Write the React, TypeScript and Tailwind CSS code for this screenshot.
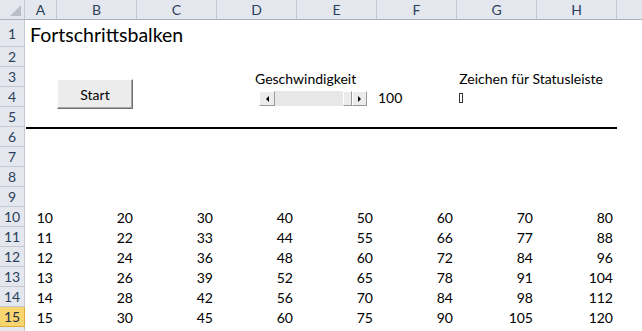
import React from "react";

const COLS = [
  { name: "A", w: "w-[32px]" },
  { name: "B", w: "w-[80px]" },
  { name: "C", w: "w-[80px]" },
  { name: "D", w: "w-[80px]" },
  { name: "E", w: "w-[80px]" },
  { name: "F", w: "w-[80px]" },
  { name: "G", w: "w-[80px]" },
  { name: "H", w: "w-[80px]" },
  { name: "", w: "w-[40px]" },
];

const ROWS = Array.from({ length: 16 }, (_, i) => i + 1);

function RowHeader({ n }: { n: number }) {
  const selected = n === 15;
  return (
    <div
      className={
        selected
          ? "flex w-[25px] shrink-0 items-center justify-center border-r border-b border-[#e2a93c] bg-[#f9d56f] text-[#1f2f46]"
          : "flex w-[25px] shrink-0 items-center justify-center border-r border-b border-[#c3c9d1] bg-[#e4e8ee] text-[#2b3f5c]"
      }
    >
      {/* row 16 is only a sliver at the bottom edge */}
      {n < 16 ? n : null}
    </div>
  );
}

function NumberRow({ r }: { r: number }) {
  return (
    <>
      {COLS.slice(0, 8).map((c, i) => (
        <div key={c.name} className={`${c.w} shrink-0 pr-[4px] text-right`}>
          {r * (i + 1)}
        </div>
      ))}
    </>
  );
}

function ScrollBar() {
  return (
    <div className="absolute left-[259px] top-[91px] flex h-[15px] w-[108px]">
      <div className="flex w-[16px] items-center justify-center border border-[#9a9a9a] border-t-white border-l-white bg-[#ececec]">
        <span className="h-0 w-0 border-y-[3px] border-r-[3px] border-y-transparent border-r-black" />
      </div>
      <div className="flex-1 bg-[#f0f0f0] bg-[radial-gradient(#dcdcdc_0.6px,transparent_0.8px)] bg-[length:2px_2px]" />
      <div className="w-[9px] border border-[#9a9a9a] border-t-white border-l-white bg-[#ececec]" />
      <div className="flex w-[15px] items-center justify-center border border-[#9a9a9a] border-t-white border-l-white bg-[#ececec]">
        <span className="h-0 w-0 border-y-[3px] border-l-[3px] border-y-transparent border-l-black" />
      </div>
    </div>
  );
}

export default function App() {
  return (
    <div className="relative h-[331px] w-[642px] overflow-hidden bg-white font-['Lato',sans-serif] text-[14px] text-black">
      {/* column headers */}
      <div className="flex h-[20px] border-b border-[#aab3bf] bg-[#e4e8ee] text-[#2b3f5c]">
        <div className="relative w-[25px] shrink-0 border-r border-[#c3c9d1]">
          <span className="absolute bottom-[3px] right-[3px] h-0 w-0 border-b-[11px] border-l-[11px] border-b-[#b8bfc8] border-l-transparent" />
        </div>
        {COLS.map((c) => (
          <div
            key={c.name || "I"}
            className={`${c.w} flex shrink-0 items-center justify-center border-r border-[#c3c9d1]`}
          >
            {c.name}
          </div>
        ))}
      </div>

      {ROWS.map((n) => (
        <div key={n} className={`flex ${n === 1 ? "h-[27px]" : "h-[20px]"}`}>
          <RowHeader n={n} />
          <div className="flex flex-1 items-center">
            {n === 1 && (
              <span className="pl-[5px] pt-[2px] text-[19.5px] leading-none">Fortschrittsbalken</span>
            )}
            {n === 3 && (
              <>
                <span className="pl-[230px] pt-[3px]">Geschwindigkeit</span>
                <span className="pl-[103px] pt-[3px]">Zeichen für Statusleiste</span>
              </>
            )}
            {n === 4 && (
              <>
                <span className="pl-[353px]">100</span>
                <span className="ml-[57px] mt-[1px] h-[10px] w-[4px] border border-[#333]" />
              </>
            )}
            {n >= 10 && n <= 15 && <NumberRow r={n} />}
          </div>
        </div>
      ))}

      {/* sheet objects */}
      <button className="absolute left-[57px] top-[79px] flex h-[30px] w-[76px] items-center justify-center border border-t-white border-l-white border-b-[#6e6e6e] border-r-[#6e6e6e] bg-[#ececec] text-[14px] shadow-[inset_-1px_-1px_0_#a8a8a8]">
        Start
      </button>
      <ScrollBar />
      <div className="absolute left-[26px] top-[127px] h-[1.5px] w-[591px] bg-black" />
    </div>
  );
}
